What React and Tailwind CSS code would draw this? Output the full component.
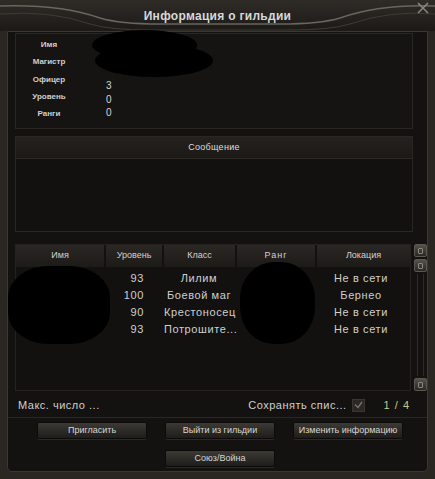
import React from "react";

const font = { fontFamily: '"Liberation Sans", Arial, sans-serif' };

const members = [
  { level: 93, cls: "Лилим", loc: "Не в сети" },
  { level: 100, cls: "Боевой маг", loc: "Бернео" },
  { level: 90, cls: "Крестоносец", loc: "Не в сети" },
  { level: 93, cls: "Потрошите...", loc: "Не в сети" },
];

const Btn = ({ children }) => (
  <button className="w-[110px] h-[17px] rounded-[2px] border border-[#0c0b0a] bg-gradient-to-b from-[#3d3a35] to-[#1f1d1a] text-[9px] text-[#d6d6d6] shadow-[0_1px_0_#2c2925]">
    {children}
  </button>
);

const ScrollBtn = () => (
  <div className="w-[13px] h-[13px] rounded-[2px] border border-[#5a5650] bg-gradient-to-b from-[#55514b] to-[#2a2824] flex items-center justify-center">
    <div className="w-[5px] h-[6px] border border-[#8a857d] rounded-[1px]" />
  </div>
);

export default function App() {
  return (
    <div className="w-[435px] h-[479px] relative overflow-hidden bg-[#2a2723]" style={font}>
      {/* title bar */}
      <div className="h-[31px] relative flex items-center justify-center bg-gradient-to-b from-[#2f2c28] to-[#1c1a17]">
        <svg className="absolute inset-0" width="435" height="31">
          <path d="M0 6 Q60 4 100 18 Q120 24 160 24 L280 24 Q320 24 340 18 Q380 4 435 6" fill="none" stroke="#6a655d" strokeWidth="1.5" />
          <path d="M0 14 Q50 10 90 24 Q110 30 150 30 L290 30 Q330 30 350 24 Q390 10 435 14" fill="none" stroke="#3f3b35" strokeWidth="1" />
          <path d="M418 3 L428 13 M428 3 L418 13" stroke="#8c877f" strokeWidth="1.5" />
        </svg>
        <span className="relative text-[12px] font-bold text-[#d8d8d8] tracking-[0.3px] mt-[1px]">Информация о гильдии</span>
      </div>

      {/* main panel */}
      <div className="mx-[7px] h-[441px] border border-[#3b3731] rounded-b-[5px] bg-[#141210] flex flex-col pl-[7px] pr-[14px]">
        {/* info */}
        <div className="mt-[1px] h-[96px] border border-[#2a2723] bg-[#161412] flex pt-[2px]">
          <div className="w-[66px] flex flex-col items-center text-[8px] font-bold text-[#cfcfcf] leading-[17.3px]">
            <span>Имя</span>
            <span>Магистр</span>
            <span>Офицер</span>
            <span>Уровень</span>
            <span>Ранги</span>
          </div>
          <div className="flex flex-col text-[10px] text-[#d6d6d6] pl-[24px] pt-[43px] leading-[13.5px]">
            <span>3</span>
            <span>0</span>
            <span>0</span>
          </div>
        </div>

        {/* message */}
        <div className="mt-[7px] h-[96px] border border-[#2a2723] bg-[#131110] flex flex-col">
          <div className="h-[22px] bg-gradient-to-b from-[#24211e] to-[#1c1a17] border-b border-[#2e2a25] flex items-center justify-center text-[9px] text-[#dedede] tracking-[0.3px]">
            Сообщение
          </div>
        </div>

        {/* table */}
        <div className="mt-[12px] h-[147px] flex">
          <div className="flex-1 border border-[#24211e] bg-[#131110] flex flex-col">
            <div className="h-[22px] flex gap-[2px] text-[9px] text-[#d2d2d2]">
              <div className="w-[88px] bg-gradient-to-b from-[#2a2724] to-[#1d1b18] flex items-center justify-center">Имя</div>
              <div className="w-[56px] bg-gradient-to-b from-[#2a2724] to-[#1d1b18] flex items-center justify-center">Уровень</div>
              <div className="w-[71px] bg-gradient-to-b from-[#2a2724] to-[#1d1b18] flex items-center justify-center">Класс</div>
              <div className="w-[78px] bg-gradient-to-b from-[#2a2724] to-[#1d1b18] flex items-center justify-center tracking-[1px]">Ранг</div>
              <div className="flex-1 bg-gradient-to-b from-[#2a2724] to-[#1d1b18] flex items-center justify-center">Локация</div>
            </div>
            <div className="pt-[3px] flex flex-col text-[11px] text-[#cfcfcf] tracking-[0.6px]">
              {members.map((m, i) => (
                <div key={i} className="h-[17px] flex items-center">
                  <div className="w-[90px]" />
                  <div className="w-[40px] text-right pr-[2px]">{m.level}</div>
                  <div className="w-[88px] pl-[18px] text-center">{m.cls}</div>
                  <div className="w-[78px]" />
                  <div className="flex-1 text-center">{m.loc}</div>
                </div>
              ))}
            </div>
          </div>
          <div className="w-[14px] ml-[2px] mr-[-14px] flex flex-col items-center gap-[2px]">
            <ScrollBtn />
            <ScrollBtn />
            <div className="flex-1 w-[7px] border-x border-[#2e2b27]" />
            <ScrollBtn />
          </div>
        </div>

        {/* footer */}
        <div className="h-[26px] flex items-center text-[11px] text-[#cfcfcf] tracking-[0.5px] pt-[2px]">
          <span className="pl-[3px]">Макс. число ...</span>
          <span className="ml-auto">Сохранять спис...</span>
          <div className="ml-[5px] w-[13px] h-[13px] bg-[#2b2825] border border-[#3a3631] flex items-center justify-center">
            <svg width="9" height="8" viewBox="0 0 9 8"><path d="M1 3.5 L4 6.5 L8 1" stroke="#7a766f" strokeWidth="1.3" fill="none" /></svg>
          </div>
          <span className="ml-[19px] mr-[3px] text-[#c9c58e] tracking-[1px]">1 / 4</span>
        </div>
        <div className="border-t border-[#2a2723] mx-[-7px] mr-[-14px]" />
        <div className="flex flex-col items-center gap-[11px] pt-[4px]">
          <div className="flex gap-[18px] pl-[12px]">
            <Btn>Пригласить</Btn>
            <Btn>Выйти из гильдии</Btn>
            <Btn>Изменить информацию</Btn>
          </div>
          <div className="flex pl-[12px]">
            <Btn>Союз/Война</Btn>
          </div>
        </div>
      </div>

      {/* redaction blobs */}
      <div className="absolute left-[92px] top-[30px] w-[105px] h-[30px] rounded-[50%] bg-black" />
      <div className="absolute left-[95px] top-[44px] w-[118px] h-[33px] rounded-[50%] bg-black" />
      <div className="absolute left-[8px] top-[266px] w-[102px] h-[78px] rounded-[40%] bg-black" />
      <div className="absolute left-[240px] top-[262px] w-[75px] h-[82px] rounded-[45%] bg-black" />
    </div>
  );
}
